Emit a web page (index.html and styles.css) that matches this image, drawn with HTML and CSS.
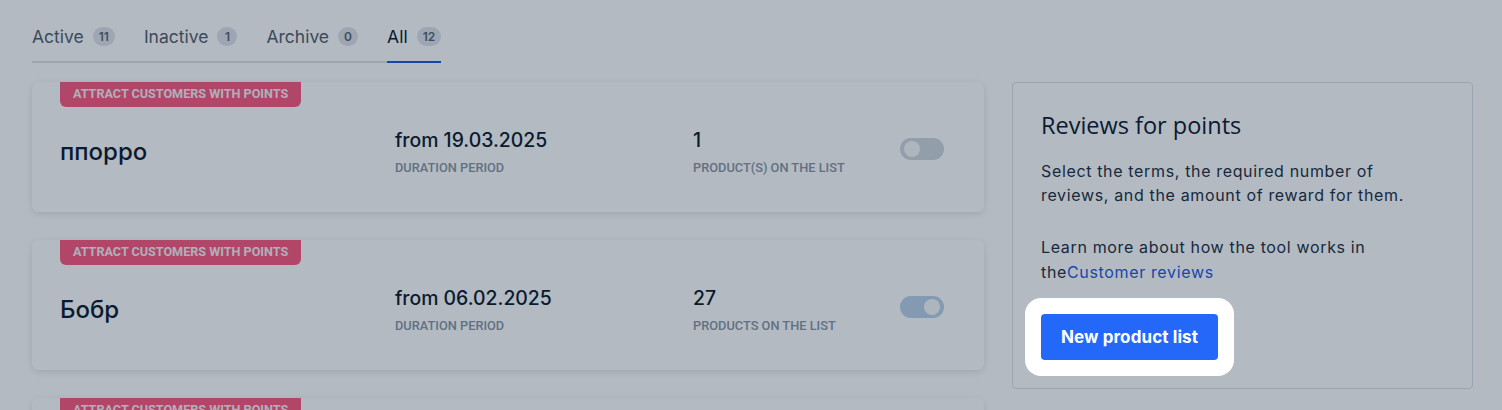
FILE: index.html
```html
<!DOCTYPE html>
<html lang="en">
<head>
    <meta charset="UTF-8">
    <meta name="viewport" content="width=device-width, initial-scale=1.0">
    <title>Reviews for points</title>
    <link rel="stylesheet" href="styles.css">
</head>
<body>
    <div class="page">
        <nav class="tabs">
            <a class="tab">Active <span class="count">11</span></a>
            <a class="tab">Inactive <span class="count">1</span></a>
            <a class="tab">Archive <span class="count">0</span></a>
            <a class="tab active">All <span class="count">12</span></a>
        </nav>

        <div class="layout">
            <div class="lists">
                <div class="card">
                    <span class="tag">Attract customers with points</span>
                    <div class="card-row">
                        <div class="name">ппорро</div>
                        <div class="stat">
                            <div class="value">from 19.03.2025</div>
                            <div class="label">Duration period</div>
                        </div>
                        <div class="stat">
                            <div class="value">1</div>
                            <div class="label">Product(s) on the list</div>
                        </div>
                        <span class="switch"></span>
                    </div>
                </div>

                <div class="card">
                    <span class="tag">Attract customers with points</span>
                    <div class="card-row">
                        <div class="name">Бобр</div>
                        <div class="stat">
                            <div class="value">from 06.02.2025</div>
                            <div class="label">Duration period</div>
                        </div>
                        <div class="stat">
                            <div class="value">27</div>
                            <div class="label">Products on the list</div>
                        </div>
                        <span class="switch on"></span>
                    </div>
                </div>

                <div class="card">
                    <span class="tag">Attract customers with points</span>
                </div>
            </div>

            <aside class="info">
                <h2>Reviews for points</h2>
                <p>Select the terms, the required number of reviews, and the amount of reward for them.</p>
                <p>Learn more about how the tool works in the<a href="#">Customer reviews</a></p>
                <div class="spotlight">
                    <button class="btn">New product list</button>
                </div>
            </aside>
        </div>
    </div>
</body>
</html>
```

FILE: styles.css
```css
body {
    margin: 0;
    height: 410px;
    overflow: hidden;
    background: #ffffff;
    font-family: Inter, "Noto Sans", sans-serif;
    color: #0e1c2f;
}

.page {
    padding: 0 29px 0 32px;
}

/* tabs */
.tabs {
    display: inline-flex;
    gap: 29px;
    padding-top: 20px;
    border-bottom: 2px solid #e2e5e9;
}

.tab {
    display: flex;
    align-items: center;
    gap: 9px;
    height: 32px;
    padding-bottom: 9px;
    margin-bottom: -2px;
    font-size: 17.5px;
    color: #55606e;
    border-bottom: 2px solid transparent;
}

.tab.active {
    color: #0e1c2f;
    border-bottom-color: #1f5ae0;
}

.tab .count {
    min-width: 8px;
    padding: 0 6px;
    height: 19px;
    line-height: 19px;
    border-radius: 10px;
    background: #e0e3e8;
    color: #5a6573;
    font-size: 12px;
    font-weight: 600;
    text-align: center;
}

/* main grid */
.layout {
    display: grid;
    grid-template-columns: 952px 1fr;
    gap: 28px;
    margin-top: 19px;
    align-items: start;
}

.lists {
    display: flex;
    flex-direction: column;
    gap: 28px;
}

.card {
    height: 130px;
    box-sizing: border-box;
    padding: 0 28px;
    background: #ffffff;
    border-radius: 6px;
    box-shadow: 0 2px 6px rgba(20, 35, 60, 0.12);
}

.tag {
    display: inline-block;
    height: 25px;
    line-height: 24px;
    padding: 0 13px;
    border-radius: 0 0 6px 6px;
    background: #fc5a80;
    color: #fbeff3;
    font-family: Roboto, sans-serif;
    font-size: 12.6px;
    font-weight: 700;
    text-transform: uppercase;
}

.card-row {
    display: grid;
    grid-template-columns: 335px 298px 207px 44px;
    align-items: center;
    padding-top: 20px;
}

.name {
    margin-top: 1px;
    font-size: 24px;
    font-weight: 500;
}

.value {
    font-size: 19.4px;
    font-weight: 500;
    line-height: 26px;
}

.label {
    margin-top: 7px;
    font-family: Roboto, sans-serif;
    font-size: 12.8px;
    font-weight: 500;
    line-height: 15px;
    color: #8c96a3;
    text-transform: uppercase;
}

.switch {
    position: relative;
    width: 44px;
    height: 22px;
    margin-top: -4px;
    border-radius: 11px;
    background: #d2d7de;
}

.switch::after {
    content: "";
    position: absolute;
    top: 3px;
    left: 4px;
    width: 16px;
    height: 16px;
    border-radius: 50%;
    background: #f7f8fa;
}

.switch.on {
    background: #bcd1ea;
}

.switch.on::after {
    left: auto;
    right: 4px;
}

/* side panel */
.info {
    border: 1px solid #dde1e6;
    border-radius: 4px;
    padding: 28px 40px 28px 28px;
    background: #ffffff;
}

.info h2 {
    margin: 0 0 20px;
    font-family: "Open Sans", sans-serif;
    font-size: 23.5px;
    font-weight: 400;
    line-height: 28px;
}

.info p {
    margin: 0 0 28px;
    font-size: 16px;
    line-height: 24px;
    letter-spacing: 0.65px;
    color: #233042;
}

.info p:last-of-type {
    margin-bottom: 29px;
    line-height: 25px;
}

.info a {
    color: #1f5ae0;
    text-decoration: none;
}

.spotlight {
    position: relative;
    display: inline-block;
    vertical-align: top;
}

/* tour overlay with a hole round the button */
.spotlight::before {
    content: "";
    position: absolute;
    inset: -16px;
    border-radius: 16px;
    box-shadow: 0 0 0 3000px rgba(2, 25, 52, 0.3);
    pointer-events: none;
    z-index: 10;
}

.btn {
    display: block;
    width: 177px;
    height: 46px;
    border: none;
    border-radius: 4px;
    background: #2468fa;
    color: #ffffff;
    font-family: Inter, sans-serif;
    font-size: 17px;
    font-weight: 700;
    letter-spacing: 0.1px;
    cursor: pointer;
}
```
